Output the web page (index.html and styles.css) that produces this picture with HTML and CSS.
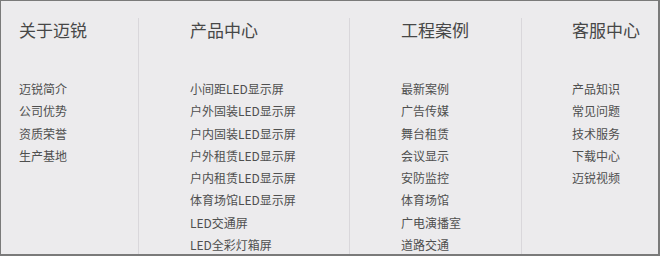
FILE: index.html
```html
<!DOCTYPE html>
<html lang="zh-CN">
<head>
<meta charset="utf-8">
<link rel="stylesheet" href="styles.css">
</head>
<body>
<div class="frame">
  <div class="col col-1">
    <h3 class="title">关于迈锐</h3>
    <ul class="links">
      <li>迈锐简介</li>
      <li>公司优势</li>
      <li>资质荣誉</li>
      <li>生产基地</li>
    </ul>
  </div>
  <div class="col col-2">
    <h3 class="title">产品中心</h3>
    <ul class="links">
      <li>小间距LED显示屏</li>
      <li>户外固装LED显示屏</li>
      <li>户内固装LED显示屏</li>
      <li>户外租赁LED显示屏</li>
      <li>户内租赁LED显示屏</li>
      <li>体育场馆LED显示屏</li>
      <li>LED交通屏</li>
      <li>LED全彩灯箱屏</li>
    </ul>
  </div>
  <div class="col col-3">
    <h3 class="title">工程案例</h3>
    <ul class="links">
      <li>最新案例</li>
      <li>广告传媒</li>
      <li>舞台租赁</li>
      <li>会议显示</li>
      <li>安防监控</li>
      <li>体育场馆</li>
      <li>广电演播室</li>
      <li>道路交通</li>
    </ul>
  </div>
  <div class="col col-4">
    <h3 class="title">客服中心</h3>
    <ul class="links">
      <li>产品知识</li>
      <li>常见问题</li>
      <li>技术服务</li>
      <li>下载中心</li>
      <li>迈锐视频</li>
    </ul>
  </div>
</div>
</body>
</html>
```
FILE: styles.css
```css
html, body {
  margin: 0;
  padding: 0;
}
body {
  font-family: "Noto Sans CJK SC", "Noto Sans", sans-serif;
  background: #ecebed;
}
.frame {
  box-sizing: border-box;
  width: 660px;
  height: 256px;
  overflow: hidden;
  display: flex;
  background: #ecebed;
  border-top: 1px solid #7a7a7a;
  border-left: 1px solid #7a7a7a;
  border-right: 2px solid #7a7a7a;
  border-bottom: 2px solid #7a7a7a;
}
.col {
  box-sizing: border-box;
  margin-top: 17px;
  flex: none;
}
.col + .col {
  border-left: 1px solid #d9d7db;
}
.col-1 { width: 137px; padding-left: 18px; }
.col-2 { width: 211px; padding-left: 51px; }
.col-3 { width: 172px; padding-left: 51px; }
.col-4 { flex: 1; padding-left: 50px; }
.title {
  margin: 0;
  font-size: 17px;
  font-weight: normal;
  line-height: 24px;
  color: #474747;
}
.links {
  list-style: none;
  margin: 36px 0 0;
  padding: 0;
  font-size: 12px;
  line-height: 22.3px;
  color: #4f4f4f;
}
.links li {
  white-space: nowrap;
}
```
